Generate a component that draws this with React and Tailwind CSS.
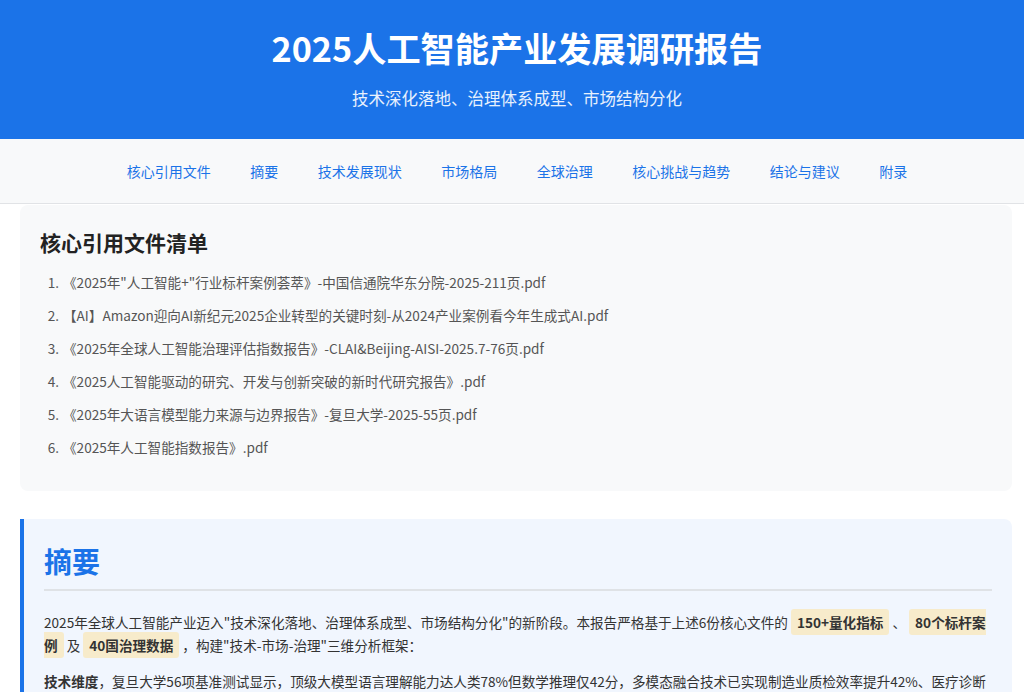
const files = [
  "《2025年\"人工智能+\"行业标杆案例荟萃》-中国信通院华东分院-2025-211页.pdf",
  "【AI】Amazon迎向AI新纪元2025企业转型的关键时刻-从2024产业案例看今年生成式AI.pdf",
  "《2025年全球人工智能治理评估指数报告》-CLAI&Beijing-AISI-2025.7-76页.pdf",
  "《2025人工智能驱动的研究、开发与创新突破的新时代研究报告》.pdf",
  "《2025年大语言模型能力来源与边界报告》-复旦大学-2025-55页.pdf",
  "《2025年人工智能指数报告》.pdf",
];

const navItems = [
  "核心引用文件",
  "摘要",
  "技术发展现状",
  "市场格局",
  "全球治理",
  "核心挑战与趋势",
  "结论与建议",
  "附录",
];

const Mark = ({ children }) => (
  <span className="bg-[#f7ebcb] font-bold text-[#333] px-[6px] py-[3px] rounded-[3px]">
    {children}
  </span>
);

export default function App() {
  return (
    <div className="min-h-screen bg-white font-['Noto_Sans_CJK_SC','Noto_Sans',sans-serif] text-[#333]">
      {/* Header */}
      <header className="bg-[#1b73e8] text-white text-center h-[139px] pt-[22px] pl-[10px]">
        <h1 className="text-[34.2px] font-bold leading-[50px]">2025人工智能产业发展调研报告</h1>
        <p className="mt-[14px] text-[16.5px] leading-[24px] text-white/90">
          技术深化落地、治理体系成型、市场结构分化
        </p>
      </header>

      {/* Nav */}
      <nav className="bg-[#f8f9fa] border-b border-[#e1e3e6] h-[65px] flex items-center justify-center gap-[39.5px] pl-[10px]">
        {navItems.map((item) => (
          <a key={item} href="#" className="text-[14px] text-[#1b73e8] leading-5">
            {item}
          </a>
        ))}
      </nav>

      <main className="pl-5 pr-3">
        {/* Files */}
        <section className="mt-[1px] bg-[#f8f9fa] rounded-lg pt-[23px] pb-[32px] px-5">
          <h2 className="text-[21px] font-bold text-[#222] leading-[28px] mb-[15px]">核心引用文件清单</h2>
          <ol className="list-decimal pl-[22px] text-[13.6px] text-[#555]">
            {files.map((f) => (
              <li key={f} className="leading-[23px] mb-[10px] pl-[1px] last:mb-0">
                {f}
              </li>
            ))}
          </ol>
        </section>

        {/* Summary */}
        <section className="mt-[28px] bg-[#f1f6fe] border-l-4 border-[#1b73e8] rounded-r-lg pt-[22px] px-5 pb-6">
          <h2 className="text-[28px] font-bold text-[#1b73e8] leading-[40px] pb-[8px] border-b-2 border-[#dfe2e6]">
            摘要
          </h2>
          <p className="mt-[20px] text-[13.6px] leading-[23px] text-[#333]">
            2025年全球人工智能产业迈入"技术深化落地、治理体系成型、市场结构分化"的新阶段。本报告严格基于上述6份核心文件的 <Mark>150+量化指标</Mark> 、 <Mark>80个标杆案例</Mark> 及 <Mark>40国治理数据</Mark> ，构建"技术-市场-治理"三维分析框架：
          </p>
          <p className="mt-[13px] text-[13.6px] leading-[23px] text-[#333]">
            <strong className="font-bold">技术维度</strong>，复旦大学56项基准测试显示，顶级大模型语言理解能力达人类78%但数学推理仅42分，多模态融合技术已实现制造业质检效率提升42%、医疗诊断准确率突破90%，推动人工智能从实验室走向规模化商业应用。
          </p>
        </section>
      </main>
    </div>
  );
}
